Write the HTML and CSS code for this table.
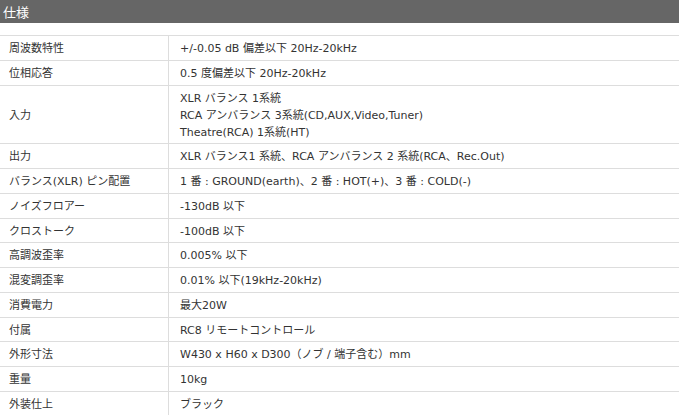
FILE: index.html
```html
<!DOCTYPE html>
<html lang="ja">
<head>
<meta charset="utf-8">
<title>仕様</title>
<link rel="stylesheet" href="styles.css">
</head>
<body>
<h2 class="section-title">仕様</h2>
<dl class="spec">
  <dt>周波数特性</dt><dd>+/-0.05 dB 偏差以下 20Hz-20kHz</dd>
  <dt>位相応答</dt><dd>0.5 度偏差以下 20Hz-20kHz</dd>
  <dt>入力</dt><dd>XLR バランス 1系統<br>RCA アンバランス 3系統(CD,AUX,Video,Tuner)<br>Theatre(RCA) 1系統(HT)</dd>
  <dt>出力</dt><dd>XLR バランス1 系統、RCA アンバランス 2 系統(RCA、Rec.Out)</dd>
  <dt>バランス(XLR) ピン配置</dt><dd>1 番 : GROUND(earth)、2 番 : HOT(+)、3 番 : COLD(-)</dd>
  <dt>ノイズフロアー</dt><dd>-130dB 以下</dd>
  <dt>クロストーク</dt><dd>-100dB 以下</dd>
  <dt>高調波歪率</dt><dd>0.005% 以下</dd>
  <dt>混変調歪率</dt><dd>0.01% 以下(19kHz-20kHz)</dd>
  <dt>消費電力</dt><dd>最大20W</dd>
  <dt>付属</dt><dd>RC8 リモートコントロール</dd>
  <dt>外形寸法</dt><dd>W430 x H60 x D300（ノブ / 端子含む）mm</dd>
  <dt>重量</dt><dd>10kg</dd>
  <dt>外装仕上</dt><dd>ブラック</dd>
</dl>
</body>
</html>
```
FILE: styles.css
```css
html, body {
  margin: 0;
  padding: 0;
  background: #fff;
}
body {
  font-family: "DejaVu Sans", "Noto Sans CJK JP", sans-serif;
  color: #333;
  overflow: hidden;
}
.section-title {
  margin: 0 0 12px;
  height: 23px;
  background: #666;
  color: #fff;
  font-family: "Noto Sans CJK JP", sans-serif;
  font-weight: normal;
  font-size: 13px;
  line-height: 23px;
  padding: 0 3px;
}
.spec {
  margin: 0;
  display: grid;
  grid-template-columns: 169px 1fr;
  border-top: 1px solid #ddd;
  font-size: 11px;
  line-height: 17px;
}
.spec dt, .spec dd {
  margin: 0;
  border-bottom: 1px solid #ddd;
  padding: 4px 10px 2.75px;
  display: flex;
  flex-direction: column;
  justify-content: center;
}
.spec dt {
  padding-left: 9px;
  border-right: 1px solid #ddd;
}
.spec dd {
  padding-left: 11px;
  display: block;
}
```
